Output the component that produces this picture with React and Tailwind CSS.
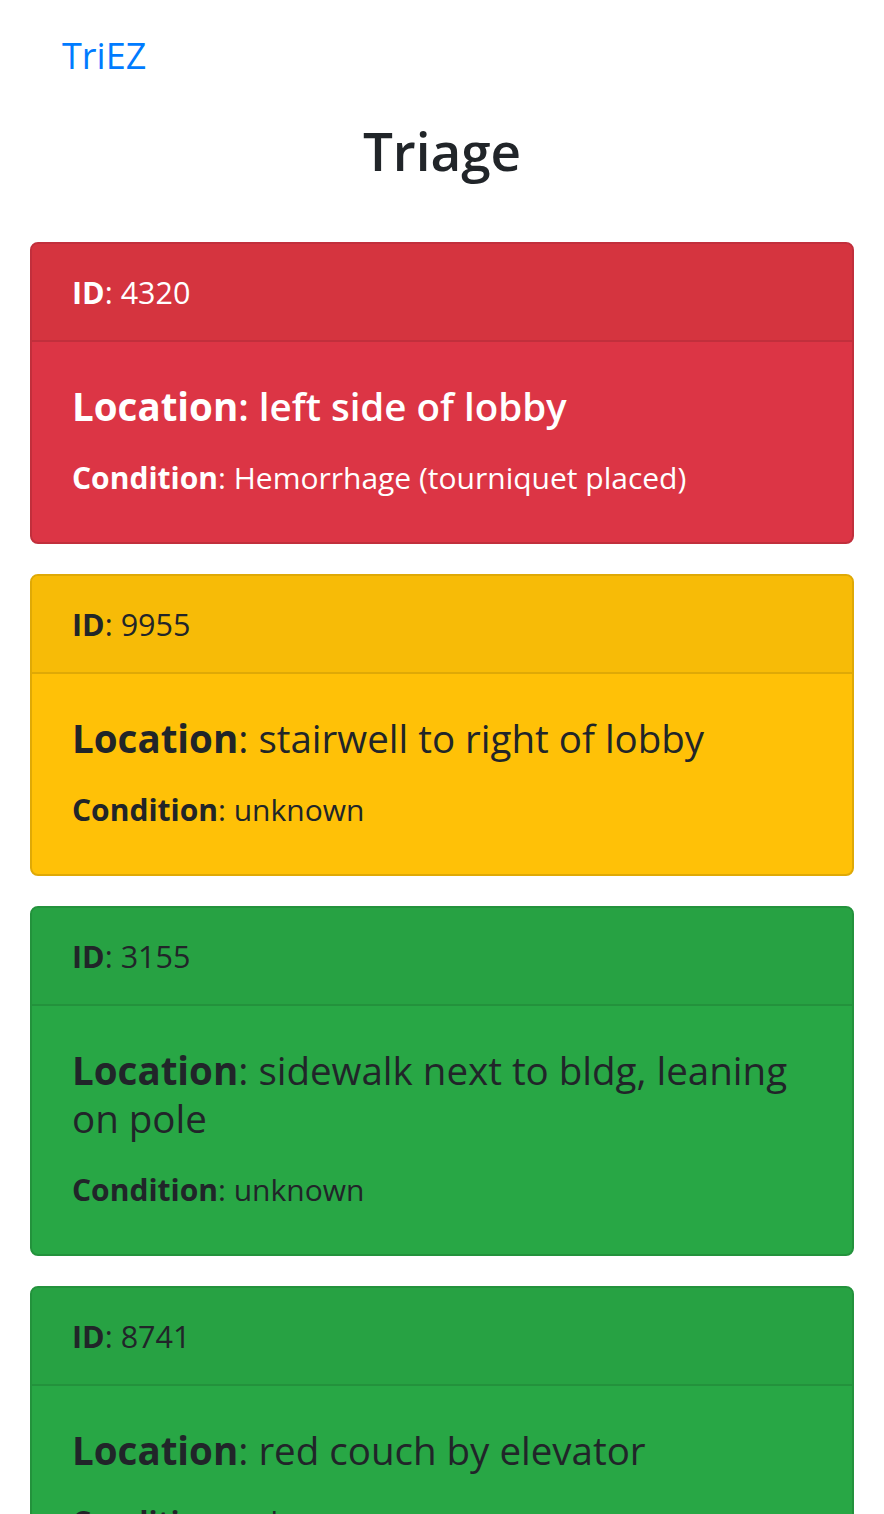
const patients = [
  { id: 4320, location: 'left side of lobby', condition: 'Hemorrhage (tourniquet placed)', tone: 'red' },
  { id: 9955, location: 'stairwell to right of lobby', condition: 'unknown', tone: 'yellow' },
  { id: 3155, location: 'sidewalk next to bldg, leaning on pole', condition: 'unknown', tone: 'green' },
  { id: 8741, location: 'red couch by elevator', condition: 'unknown', tone: 'green' },
];

const tones = {
  red: {
    card: 'bg-[#dc3545] border-[#c12f3c] text-white',
    head: 'bg-[#d5343f] border-[#c12f3c]',
    title: 'text-white font-semibold',
  },
  yellow: {
    card: 'bg-[#ffc107] border-[#dfa906] text-[#212529]',
    head: 'bg-[#f7bb07] border-[#dfa906]',
    title: 'text-[#212529] font-medium',
  },
  green: {
    card: 'bg-[#28a745] border-[#23923c] text-[#212529]',
    head: 'bg-[#27a243] border-[#23923c]',
    title: 'text-[#212529] font-medium',
  },
};

const PatientCard = ({ patient }) => {
  const t = tones[patient.tone];
  return (
    <div className={`mb-[30px] rounded-[8px] border-2 overflow-hidden ${t.card}`}>
      <div className={`px-10 py-6 border-b-2 text-[30.5px] leading-[48px] ${t.head}`}>
        <b className="font-bold">ID</b>: {patient.id}
      </div>
      <div className="p-10">
        <h5 className={`text-[38.5px] leading-[48px] mb-6 ${t.title}`}>
          <b className="font-bold">Location</b>: {patient.location}
        </h5>
        <p className="text-[30px] leading-[48px]">
          <b className="font-bold">Condition</b>: {patient.condition}
        </p>
      </div>
    </div>
  );
};

export default function App() {
  return (
    <div className="min-h-screen bg-white text-[#212529] font-['Open_Sans',sans-serif]">
      <nav className="px-8 py-4">
        <a href="#" className="inline-block ml-[30px] pt-[10px] pb-[10px] text-[36px] leading-[60px] text-[#007bff]">
          TriEZ
        </a>
      </nav>
      <div className="px-[30px]">
        <h2 className="text-center text-[53px] leading-[77px] font-semibold mt-0 mb-[53px]">Triage</h2>
        {patients.map((p) => (
          <PatientCard key={p.id} patient={p} />
        ))}
      </div>
    </div>
  );
}
